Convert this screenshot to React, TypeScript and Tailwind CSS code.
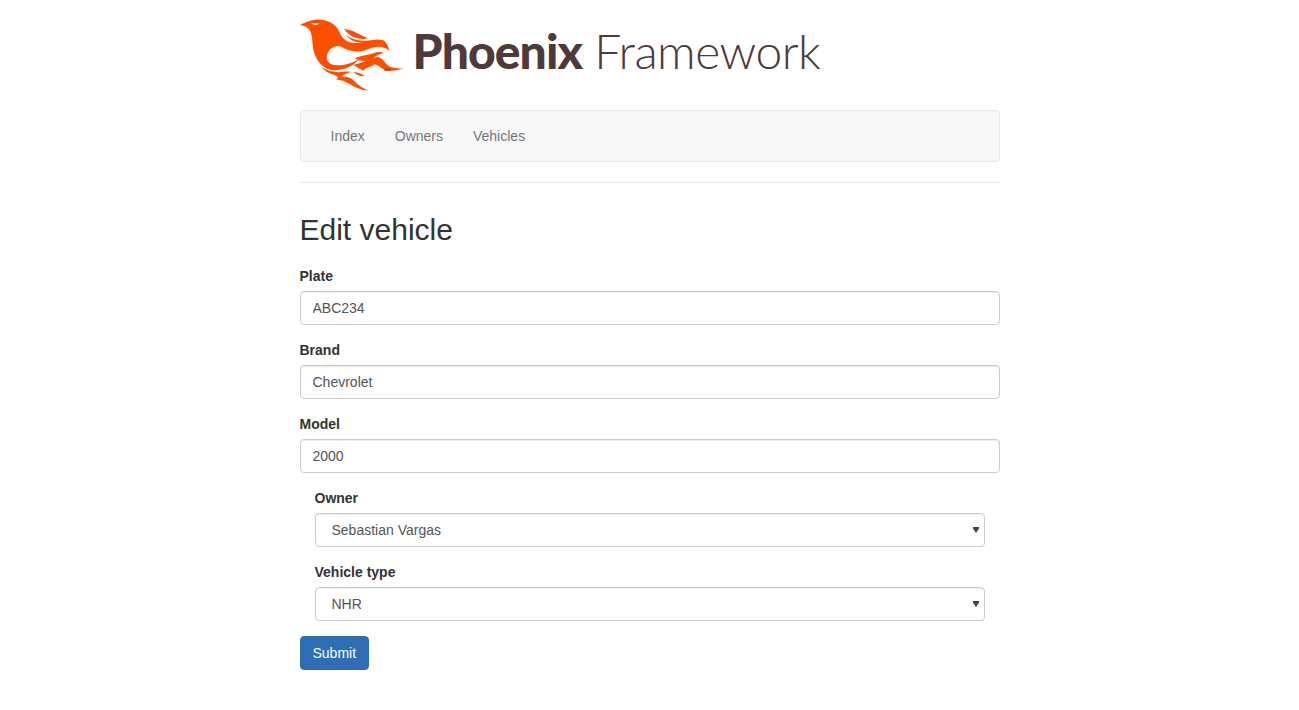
import React from 'react';

const PhoenixBird = () => (
  <svg width="130" height="90" viewBox="0 0 390 270" className="block shrink-0" fill="#fd4f00">
    {/* body and wing */}
    <path d="M15 45 C32 36 55 27 78 29 C108 31 128 48 136 72 C144 90 164 102 192 98 C214 95 240 84 262 90 C272 94 278 102 283 122 C264 106 240 108 218 118 C190 130 160 124 142 112 C122 100 96 118 95 142 C94 156 108 166 128 166 C150 166 168 160 192 148 C174 170 146 181 118 181 C90 181 68 160 58 130 C50 106 55 78 44 60 C38 52 28 48 15 45 Z" />
    <path d="M147 57 C165 58 180 66 192 72 C202 77 210 80 219 85 C198 90 178 84 166 76 C158 70 153 64 147 57 Z" />
    <path d="M152 74 C170 88 192 94 230 92 C205 102 170 100 152 74 Z" />
    {/* tail flames */}
    <path d="M180 146 C200 134 222 136 236 129 C248 125 258 124 267 130 C252 131 244 138 234 146 C218 156 198 154 180 146 Z" />
    <path d="M176 165 C198 157 218 154 238 143 C254 136 264 150 274 162 C282 172 300 176 325 175 C305 183 285 185 268 179 C256 174 250 165 240 163 C226 172 212 172 206 182 C196 178 186 172 176 165 Z" />
    <path d="M78 170 C96 182 118 188 140 186 C152 185 160 184 167 186 C156 190 146 194 138 200 C150 198 162 200 172 208 C180 214 188 228 221 242 C196 241 176 230 160 220 C150 214 136 210 122 208 C134 204 128 198 116 194 C102 190 88 182 78 170 Z" />
    <path d="M176 186 C190 187 200 191 209 198 C198 200 184 196 176 186 Z" />
    <path d="M48 40 L72 40 C68 47 58 47 48 40 Z" fill="#ffffff" />
    <path d="M268 176 H286 V182 H268 Z" fill="#8a4a30" />
  </svg>
);

const inputClass =
  "block w-full h-[34px] px-[12px] py-[6px] text-[14px] leading-[20px] text-[#555] bg-white border border-[#ccc] rounded-[4px] shadow-[inset_0_1px_1px_rgba(0,0,0,0.075)]";

const Field = ({ label, value }: { label: string; value: string }) => (
  <div className="mb-[15px]">
    <label className="block mb-[5px] text-[14px] leading-[20px] font-bold text-[#333]">{label}</label>
    <input defaultValue={value} className={inputClass} />
  </div>
);

const SelectField = ({ label, value }: { label: string; value: string }) => (
  <div className="mb-[15px] px-[15px]">
    <label className="block mb-[5px] text-[14px] leading-[20px] font-bold text-[#333]">{label}</label>
    <div className="relative">
      <select defaultValue={value} className={inputClass + " appearance-none pl-[16px]"}>
        <option>{value}</option>
      </select>
      {/* caret */}
      <svg width="6" height="6" viewBox="0 0 6 6" className="absolute right-[6px] top-[14px] pointer-events-none" fill="#444">
        <path d="M0 0 H6 V1.5 L3 6 L0 1.5 Z" />
      </svg>
    </div>
  </div>
);

export default function App() {
  return (
    <div className="min-h-[710px] bg-white font-['Liberation_Sans',Arial,sans-serif] text-[14px] text-[#333]">
      <div className="w-[700px] mx-auto">
        {/* Logo */}
        <div className="flex items-start h-[110px] pt-[10px]">
          <div className="-ml-[5px]">
            <PhoenixBird />
          </div>
          <div className="ml-[-12px] mt-[9px] flex items-baseline font-['Lato',sans-serif] text-[48px] leading-[64px] text-[#4e3a3a] whitespace-nowrap">
            <span className="font-black tracking-[-0.9px]">Phoenix</span>
            <span className="ml-[12px] font-light tracking-[-0.55px]">Framework</span>
          </div>
        </div>

        {/* Navbar */}
        <nav className="flex h-[52px] px-[15px] bg-[#f8f8f8] border border-[#e7e7e7] rounded-[4px] text-[#777]">
          {['Index', 'Owners', 'Vehicles'].map(item => (
            <a key={item} className="px-[15px] py-[15px] leading-[20px]">
              {item}
            </a>
          ))}
        </nav>
        <hr className="mt-[20px] border-t border-[#e7e7e7]" />

        <h2 className="mt-[30px] mb-[20px] text-[30px] leading-[33px] font-medium text-[#333]">Edit vehicle</h2>

        <form>
          <Field label="Plate" value="ABC234" />
          <Field label="Brand" value="Chevrolet" />
          <Field label="Model" value="2000" />
          <SelectField label="Owner" value="Sebastian Vargas" />
          <SelectField label="Vehicle type" value="NHR" />
          <button
            type="button"
            className="h-[34px] px-[12px] text-[14px] leading-[20px] text-white bg-[#2f6db5] border border-[#2e6da4] rounded-[4px]"
          >
            Submit
          </button>
        </form>
      </div>
    </div>
  );
}
